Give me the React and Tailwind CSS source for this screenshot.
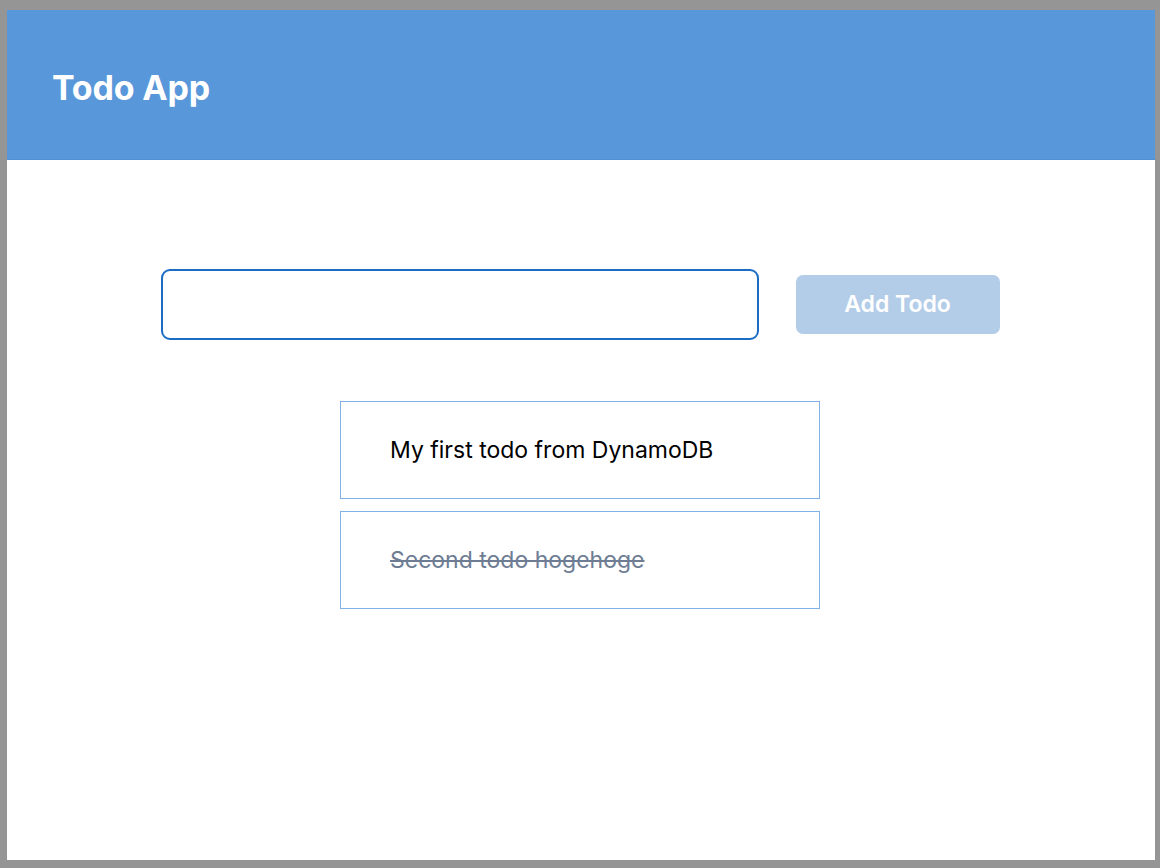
import { useState } from 'react';

const todos = [
  { id: 1, text: 'My first todo from DynamoDB', done: false },
  { id: 2, text: 'Second todo hogehoge', done: true },
];

export default function App() {
  const [value, setValue] = useState('');

  return (
    <div className="h-[868px] w-[1160px] bg-[#959595] pt-[10px] pl-[7px] pr-[5px] pb-[8px]">
      <div className="h-full bg-white flex flex-col font-['Inter',sans-serif]">
        {/* Header */}
        <header className="h-[150px] bg-[#5897da] border-b border-[#4f8fd6] flex items-center pl-[45px] pt-[5px]">
          <h1 className="text-[34px] font-bold text-white tracking-[-0.2px]">Todo App</h1>
        </header>

        {/* Input row */}
        <div className="mt-[109px] flex items-center justify-center gap-[37px] pr-[2px]">
          <input
            value={value}
            onChange={(e) => setValue(e.target.value)}
            className="w-[598px] h-[71px] rounded-[9px] border-2 border-[#1a6cc5] px-4 text-[23px] outline-none"
          />
          <button
            disabled={!value}
            className="w-[204px] h-[59px] rounded-[7px] bg-[#b3cde9] text-white text-[23px] font-semibold"
          >
            Add Todo
          </button>
        </div>

        {/* Todo list */}
        <ul className="mt-[61px] flex flex-col items-center gap-[12px] pr-[2px]">
          {todos.map((todo) => (
            <li
              key={todo.id}
              className="w-[480px] h-[98px] border border-[#7fb0e8] flex items-center pl-[49px]"
            >
              <span
                className={
                  todo.done
                    ? 'text-[23px] text-[#6e7d94] line-through'
                    : 'text-[23px] text-black'
                }
              >
                {todo.text}
              </span>
            </li>
          ))}
        </ul>
      </div>
    </div>
  );
}
